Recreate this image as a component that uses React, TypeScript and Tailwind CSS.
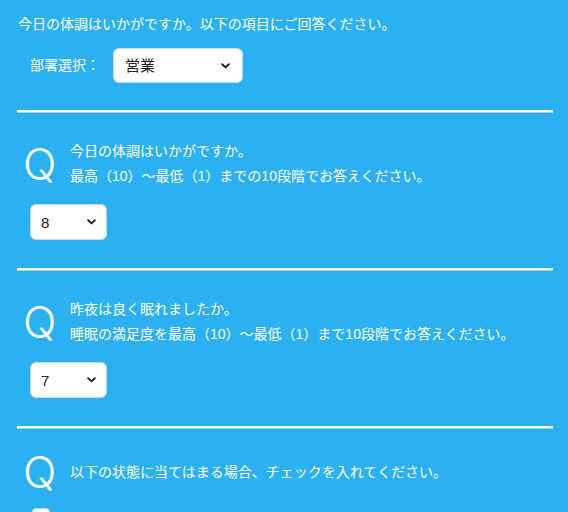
import React from "react";

function Chevron() {
  return (
    <svg width="9" height="6" viewBox="0 0 9 6" className="shrink-0">
      <path d="M1.2 1.2 L4.5 4.4 L7.8 1.2" fill="none" stroke="#222" strokeWidth="1.9" strokeLinecap="round" strokeLinejoin="round" />
    </svg>
  );
}

function FakeSelect({ value, className }: { value: string; className: string }) {
  return (
    <div
      className={
        "flex items-center justify-between bg-white rounded-[6px] border border-[#c9d6de] text-[#222] text-[15px] leading-none " +
        className
      }
    >
      <span>{value}</span>
      <Chevron />
    </div>
  );
}

function Rule() {
  return <div className="h-[3px] border-t-2 border-white border-b border-b-[#9fd2ec]" />;
}

function Question({ lines }: { lines: string[] }) {
  return (
    <div className="flex items-center">
      <div className="w-[53px] pl-[6px] text-[44px] leading-[35px] font-light text-white" style={{ fontFamily: "Inter, sans-serif" }}>
        Q
      </div>
      <div className="flex flex-col text-[14px] leading-[25px] text-white">
        {lines.map((l) => (
          <div key={l}>{l}</div>
        ))}
      </div>
    </div>
  );
}

export default function App() {
  return (
    <div
      className="min-h-screen bg-[#2bb1f2] pl-[17px] pr-[15px] pt-[12px] pb-10 text-white"
      style={{ fontFamily: '"Liberation Sans", "Noto Sans CJK JP", sans-serif' }}
    >
      <div className="pl-[1px] text-[14px] leading-[25px]">今日の体調はいかがですか。以下の項目にご回答ください。</div>
      <div className="mt-[11px] flex items-center pl-[13px]">
        <span className="text-[14px] w-[83px]">部署選択：</span>
        <FakeSelect value="営業" className="w-[130px] h-[35px] pl-[11px] pr-[12px]" />
      </div>
      <div className="mt-[27px]">
        <Rule />
      </div>

      <div className="pt-[26px]">
        <Question lines={["今日の体調はいかがですか。", "最高（10）～最低（1）までの10段階でお答えください。"]} />
        <div className="mt-[15px] pl-[13px]">
          <FakeSelect value="8" className="w-[77px] h-[36px] pl-[10px] pr-[10px]" />
        </div>
      </div>
      <div className="mt-[28px]">
        <Rule />
      </div>

      <div className="pt-[26px]">
        <Question lines={["昨夜は良く眠れましたか。", "睡眠の満足度を最高（10）～最低（1）まで10段階でお答えください。"]} />
        <div className="mt-[15px] pl-[13px]">
          <FakeSelect value="7" className="w-[77px] h-[36px] pl-[10px] pr-[10px]" />
        </div>
      </div>
      <div className="mt-[28px]">
        <Rule />
      </div>

      <div className="pt-[26px]">
        <Question lines={["以下の状態に当てはまる場合、チェックを入れてください。"]} />
        <div className="mt-[18px] pl-[15px] flex flex-col gap-3">
          <span className="block w-[18px] h-[18px] rounded-[4px] bg-white border border-[#c9d6de]" />
          <span className="block w-[18px] h-[18px] rounded-[4px] bg-white border border-[#c9d6de]" />
        </div>
      </div>
    </div>
  );
}
